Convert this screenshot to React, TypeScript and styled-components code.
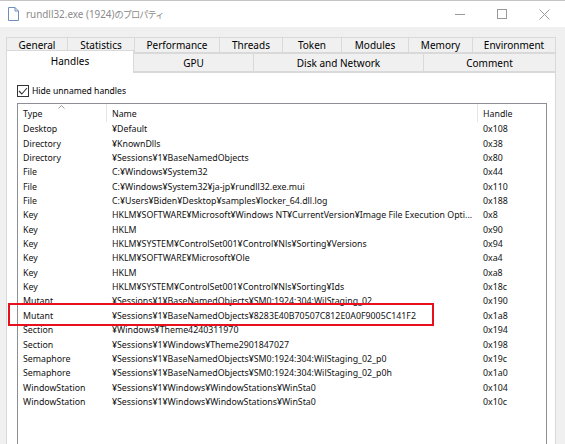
import React from "react";
import styled, { createGlobalStyle } from "styled-components";

const GlobalStyle = createGlobalStyle`
  html, body {
    margin: 0;
    padding: 0;
    background: #f0f0f0;
  }
  body {
    font-family: "Noto Sans", "Noto Sans CJK JP", sans-serif;
    color: #000;
  }
`

const Window = styled.div`
  width: 565px;
  height: 444px;
  overflow: hidden;
  background: #f0f0f0;
  display: flex;
  flex-direction: column;
`

const TitleBar = styled.div`
  height: 26px;
  flex: none;
  background: #fff;
  border-top: 1px solid #c4c4c4;
  display: flex;
  align-items: center;
  padding-left: 8px;
`

const Title = styled.span`
  margin-left: 7px;
  font-size: 9.9px;
  color: #8a8a8a;
  white-space: nowrap;
`

const TitleJa = styled.span`
  font-size: 9.2px;
  letter-spacing: -0.9px;
`

const Controls = styled.div`
  margin-left: auto;
  display: flex;
  align-items: center;
`

const ControlButton = styled.div`
  width: 42px;
  height: 26px;
  display: flex;
  align-items: center;
  justify-content: center;
`

const Body = styled.div`
  flex: 1;
  display: flex;
  flex-direction: column;
  padding: 10px 9px 0 6px;
  min-height: 0;
`

const TabRow = styled.div<{ h: number }>`
  display: flex;
  height: ${(p) => p.h}px;
  flex: none;
`

const Tab = styled.div<{ w: number; active?: boolean }>`
  width: ${(p) => p.w}px;
  flex: none;
  box-sizing: border-box;
  border: 1px solid #d9d9d9;
  border-left-width: 0;
  background: ${(p) => (p.active ? "#fff" : "#f0f0f0")};
  font-size: 10px;
  color: #000;
  display: flex;
  align-items: center;
  justify-content: center;
  white-space: nowrap;

  &:first-child {
    border-left-width: 1px;
  }

  ${(p) =>
    p.active &&
    `
    position: relative;
    z-index: 2;
    margin-top: -3px;
    height: calc(100% + 4px);
    border-bottom: none;
    padding-bottom: 3px;
  `}
`

const Panel = styled.div`
  flex: 1;
  min-height: 0;
  background: #fff;
  border: 1px solid #d9d9d9;
  border-bottom: none;
  padding: 12px 8px 0 10px;
  display: flex;
  flex-direction: column;
`

const CheckRow = styled.label`
  display: flex;
  align-items: center;
  height: 12px;
  gap: 3px;
  font-size: 8.6px;
  color: #000;
`

const CheckBox = styled.span`
  width: 12px;
  height: 12px;
  box-sizing: border-box;
  border: 1px solid #333;
  background: #fff;
  display: flex;
  align-items: center;
  justify-content: center;
`

const ListView = styled.div`
  margin-top: 6px;
  flex: 1;
  border: 1px solid #8e8f95;
  border-bottom: none;
  background: #fff;
`

const Columns = styled.div`
  display: grid;
  grid-template-columns: 89px 371px 1fr;
`

const Header = styled(Columns)`
  height: 18px;
`

const HeaderCell = styled.div`
  position: relative;
  border-right: 1px solid #e5e5e5;
  font-size: 8.8px;
  color: #111;
  padding: 4px 0 0 5px;
  white-space: nowrap;

  &:last-child {
    border-right: none;
  }
`

const SortArrow = styled.svg`
  position: absolute;
  top: 1px;
  left: 40px;
`

const Row = styled(Columns)`
  position: relative;
  height: 14.37px;
  align-items: center;
  font-size: 8.8px;
  color: #111;
  white-space: nowrap;
`

const Cell = styled.div`
  padding-left: 5px;
  overflow: hidden;
`

const Highlight = styled.div`
  position: absolute;
  left: -10px;
  top: -6px;
  width: 426px;
  height: 23px;
  box-sizing: border-box;
  border: 2.5px solid #e8101c;
  pointer-events: none;
`

const topTabs = [
  ["General", 62],
  ["Statistics", 67],
  ["Performance", 85],
  ["Threads", 63],
  ["Token", 59],
  ["Modules", 67],
  ["Memory", 64],
  ["Environment", 83],
] as const

const bottomTabs = [
  ["Handles", 128],
  ["GPU", 120],
  ["Disk and Network", 170],
  ["Comment", 132],
] as const

const handles: [string, string, string][] = [
  ["Desktop", "¥Default", "0x108"],
  ["Directory", "¥KnownDlls", "0x38"],
  ["Directory", "¥Sessions¥1¥BaseNamedObjects", "0x80"],
  ["File", "C:¥Windows¥System32", "0x44"],
  ["File", "C:¥Windows¥System32¥ja-jp¥rundll32.exe.mui", "0x110"],
  ["File", "C:¥Users¥Biden¥Desktop¥samples¥locker_64.dll.log", "0x188"],
  ["Key", "HKLM¥SOFTWARE¥Microsoft¥Windows NT¥CurrentVersion¥Image File Execution Opti...", "0x8"],
  ["Key", "HKLM", "0x90"],
  ["Key", "HKLM¥SYSTEM¥ControlSet001¥Control¥Nls¥Sorting¥Versions", "0x94"],
  ["Key", "HKLM¥SOFTWARE¥Microsoft¥Ole", "0xa4"],
  ["Key", "HKLM", "0xa8"],
  ["Key", "HKLM¥SYSTEM¥ControlSet001¥Control¥Nls¥Sorting¥Ids", "0x18c"],
  ["Mutant", "¥Sessions¥1¥BaseNamedObjects¥SM0:1924:304:WilStaging_02", "0x190"],
  ["Mutant", "¥Sessions¥1¥BaseNamedObjects¥8283E40B70507C812E0A0F9005C141F2", "0x1a8"],
  ["Section", "¥Windows¥Theme4240311970", "0x194"],
  ["Section", "¥Sessions¥1¥Windows¥Theme2901847027", "0x198"],
  ["Semaphore", "¥Sessions¥1¥BaseNamedObjects¥SM0:1924:304:WilStaging_02_p0", "0x19c"],
  ["Semaphore", "¥Sessions¥1¥BaseNamedObjects¥SM0:1924:304:WilStaging_02_p0h", "0x1a0"],
  ["WindowStation", "¥Sessions¥1¥Windows¥WindowStations¥WinSta0", "0x104"],
  ["WindowStation", "¥Sessions¥1¥Windows¥WindowStations¥WinSta0", "0x10c"],
]

const FileIcon = () => (
  <svg width="11" height="14" viewBox="0 0 11 14">
    <path d="M0.5 0.5 H7 L10.5 4 V13.5 H0.5 Z" fill="#fff" stroke="#6f8fbf" />
    <path d="M7 0.5 V4 H10.5" fill="none" stroke="#6f8fbf" />
  </svg>
)

export default function App() {
  return (
    <>
      <GlobalStyle />
      <Window>
        <TitleBar>
          <FileIcon />
          <Title>
            rundll32.exe (1924)<TitleJa>のプロパティ</TitleJa>
          </Title>
          <Controls>
            <ControlButton>
              <svg width="10" height="10" viewBox="0 0 10 10">
                <path d="M0 5.5 H10" stroke="#9a9a9a" />
              </svg>
            </ControlButton>
            <ControlButton>
              <svg width="10" height="10" viewBox="0 0 10 10">
                <rect x="0.5" y="0.5" width="9" height="9" fill="none" stroke="#9a9a9a" />
              </svg>
            </ControlButton>
            <ControlButton>
              <svg width="11" height="11" viewBox="0 0 11 11">
                <path d="M0.5 0.5 L10.5 10.5 M10.5 0.5 L0.5 10.5" stroke="#9a9a9a" />
              </svg>
            </ControlButton>
          </Controls>
        </TitleBar>
        <Body>
          <TabRow h={16}>
            {topTabs.map(([label, w]) => (
              <Tab key={label} w={w}>
                {label}
              </Tab>
            ))}
          </TabRow>
          <TabRow h={19}>
            {bottomTabs.map(([label, w], i) => (
              <Tab key={label} w={w} active={i === 0}>
                {label}
              </Tab>
            ))}
          </TabRow>
          <Panel>
            <CheckRow>
              <CheckBox>
                <svg width="10" height="8" viewBox="0 0 10 8">
                  <path d="M1 4 L3.8 7 L9 1" fill="none" stroke="#333" strokeWidth="1.1" />
                </svg>
              </CheckBox>
              Hide unnamed handles
            </CheckRow>
            <ListView>
              <Header>
                <HeaderCell>
                  <SortArrow width="7" height="4" viewBox="0 0 7 4">
                    <path d="M0.5 3.5 L3.5 0.5 L6.5 3.5" fill="none" stroke="#9a9a9a" />
                  </SortArrow>
                  Type
                </HeaderCell>
                <HeaderCell>Name</HeaderCell>
                <HeaderCell>Handle</HeaderCell>
              </Header>
              {handles.map(([type, name, handle], i) => (
                <Row key={i}>
                  {i === 13 && <Highlight />}
                  <Cell>{type}</Cell>
                  <Cell>{name}</Cell>
                  <Cell>{handle}</Cell>
                </Row>
              ))}
            </ListView>
          </Panel>
        </Body>
      </Window>
    </>
  )
}
